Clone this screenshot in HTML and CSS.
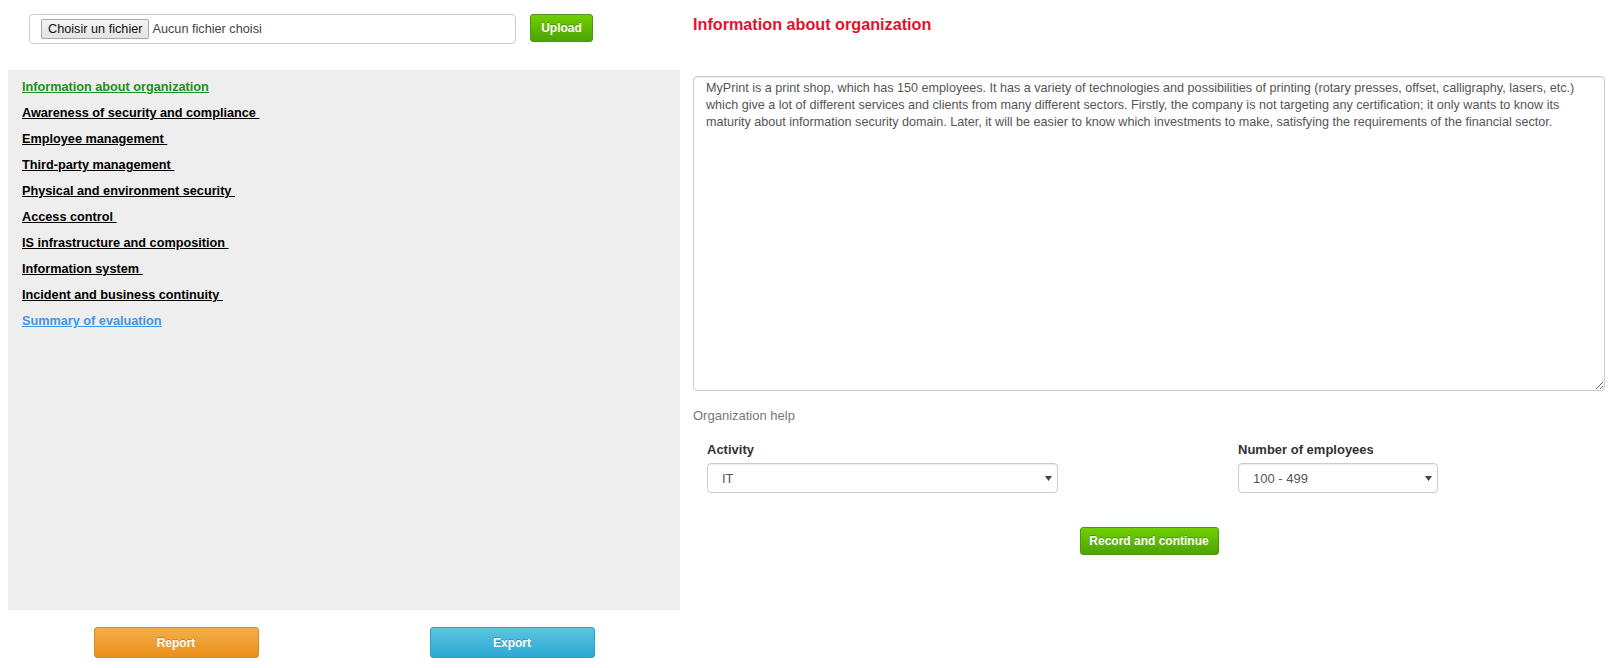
FILE: index.html
```html
<!DOCTYPE html>
<html lang="en">
<head>
<meta charset="utf-8">
<title>Information about organization</title>
<link rel="stylesheet" href="styles.css">
</head>
<body>
<div class="page">
  <div class="left">
    <div class="upload-row">
      <div class="file-box">
        <span class="file-btn">Choisir un fichier</span>
        <span class="file-name">Aucun fichier choisi</span>
      </div>
      <button class="btn btn-green upload">Upload</button>
    </div>
    <nav class="sidebar">
      <a class="nav-link active" href="#">Information about organization</a>
      <a class="nav-link" href="#">Awareness of security and compliance&nbsp;</a>
      <a class="nav-link" href="#">Employee management&nbsp;</a>
      <a class="nav-link" href="#">Third-party management&nbsp;</a>
      <a class="nav-link" href="#">Physical and environment security&nbsp;</a>
      <a class="nav-link" href="#">Access control&nbsp;</a>
      <a class="nav-link" href="#">IS infrastructure and composition&nbsp;</a>
      <a class="nav-link" href="#">Information system&nbsp;</a>
      <a class="nav-link" href="#">Incident and business continuity&nbsp;</a>
      <a class="nav-link summary" href="#">Summary of evaluation</a>
    </nav>
    <div class="bottom-actions">
      <button class="btn btn-orange wide">Report</button>
      <button class="btn btn-blue wide">Export</button>
    </div>
  </div>
  <div class="right">
    <h2 class="title">Information about organization</h2>
    <textarea class="desc">MyPrint is a print shop, which has 150 employees. It has a variety of technologies and possibilities of printing (rotary presses, offset, calligraphy, lasers, etc.)
which give a lot of different services and clients from many different sectors. Firstly, the company is not targeting any certification; it only wants to know its
maturity about information security domain. Later, it will be easier to know which investments to make, satisfying the requirements of the financial sector.</textarea>
    <p class="help">Organization help</p>
    <div class="form-row">
      <div class="field field-activity">
        <label class="field-label">Activity</label>
        <div class="select-wrap activity-select">
          <select class="select"><option>IT</option></select>
          <svg class="caret" width="7" height="5" viewBox="0 0 7 5"><path d="M0 0H7L3.5 5Z" fill="#444"/></svg>
        </div>
      </div>
      <div class="field field-emp">
        <label class="field-label">Number of employees</label>
        <div class="select-wrap emp-select">
          <select class="select"><option>100 - 499</option></select>
          <svg class="caret" width="7" height="5" viewBox="0 0 7 5"><path d="M0 0H7L3.5 5Z" fill="#444"/></svg>
        </div>
      </div>
    </div>
    <div class="actions">
      <button class="btn btn-green record">Record and continue</button>
    </div>
  </div>
</div>
</body>
</html>
```
FILE: styles.css
```css
html, body {
  margin: 0;
  padding: 0;
  background: #fff;
}
body {
  font-family: "Liberation Sans", Arial, sans-serif;
  color: #333;
}
.page {
  display: flex;
  align-items: flex-start;
}
.left {
  width: 672px;
  margin-left: 8px;
}
.upload-row {
  display: flex;
  align-items: flex-start;
  box-sizing: border-box;
  height: 70px;
  padding: 14px 0 0 21px;
}
.file-box {
  box-sizing: border-box;
  width: 487px;
  height: 30px;
  border: 1px solid #ccc;
  border-radius: 4px;
  display: flex;
  align-items: center;
  padding-left: 11px;
}
.file-btn {
  box-sizing: border-box;
  height: 20px;
  line-height: 18px;
  padding: 0 5px 0 6px;
  border: 1px solid #a8a8a8;
  border-radius: 2px;
  background: linear-gradient(#f4f4f4, #e3e3e3);
  font-size: 12.7px;
  color: #111;
}
.file-name {
  margin-left: 4px;
  font-size: 12.7px;
  color: #444;
}
.btn {
  font-family: "Liberation Sans", Arial, sans-serif;
  color: #fff;
  border-radius: 3px;
  cursor: pointer;
  padding: 0;
  text-shadow: 0 -1px 0 rgba(0, 0, 0, 0.25);
}
.btn-green {
  background: linear-gradient(#6fd000, #4da300);
  border: 1px solid #4b9813;
  font-weight: bold;
  font-size: 12px;
}
.btn-orange {
  background: linear-gradient(#f3ae4d, #eb9117);
  border: 1px solid #dc8a1f;
  font-size: 12px;
  font-weight: bold;
}
.btn-blue {
  background: linear-gradient(#5cc4e2, #2ca9d2);
  border: 1px solid #2c9fc6;
  font-size: 12px;
  font-weight: bold;
}
.upload {
  margin-left: 14px;
  width: 63px;
  height: 28px;
}
.sidebar {
  box-sizing: border-box;
  height: 540px;
  background: #eeeeee;
  padding: 4px 0 0 14px;
  display: flex;
  flex-direction: column;
  align-items: flex-start;
}
.nav-link {
  font-weight: bold;
  font-size: 12.7px;
  line-height: 26px;
  color: #000;
  text-decoration: underline;
}
.nav-link.active {
  color: #1f8f1f;
}
.nav-link.summary {
  color: #3d96ea;
}
.bottom-actions {
  display: grid;
  grid-template-columns: 1fr 1fr;
  margin-top: 17px;
}
.wide {
  justify-self: center;
  width: 165px;
  height: 31px;
}
.right {
  width: 912px;
  margin-left: 13px;
}
.title {
  margin: 0;
  padding-top: 14px;
  font-size: 16.2px;
  line-height: 21px;
  font-weight: bold;
  color: #e2122e;
}
.desc {
  display: block;
  box-sizing: border-box;
  width: 912px;
  height: 315px;
  margin-top: 41px;
  padding: 3px 12px;
  border: 1px solid #ccc;
  border-radius: 4px;
  box-shadow: inset 0 1px 1px rgba(0, 0, 0, 0.075);
  font-family: "Liberation Sans", Arial, sans-serif;
  font-size: 12.6px;
  line-height: 17px;
  color: #555;
  background: #fff;
  outline: none;
}
.help {
  margin: 16px 0 0;
  font-size: 13px;
  line-height: 18px;
  color: #777;
}
.form-row {
  display: flex;
  margin-top: 16px;
}
.field-activity {
  box-sizing: border-box;
  width: 545px;
  padding-left: 14px;
}
.field-label {
  display: block;
  font-size: 13px;
  line-height: 18px;
  font-weight: bold;
  color: #333;
  margin-bottom: 4px;
}
.select-wrap {
  position: relative;
}
.activity-select {
  width: 351px;
}
.emp-select {
  width: 200px;
}
.select {
  -webkit-appearance: none;
  appearance: none;
  box-sizing: border-box;
  width: 100%;
  height: 30px;
  border: 1px solid #ccc;
  border-radius: 4px;
  padding: 0 20px 0 14px;
  background: #fff;
  font-family: "Liberation Sans", Arial, sans-serif;
  font-size: 13px;
  color: #555;
  box-shadow: inset 0 1px 1px rgba(0, 0, 0, 0.075);
}
.caret {
  position: absolute;
  right: 6px;
  top: 13px;
  pointer-events: none;
}
.actions {
  display: flex;
  justify-content: center;
  margin-top: 34px;
}
.record {
  width: 139px;
  height: 28px;
}
```
